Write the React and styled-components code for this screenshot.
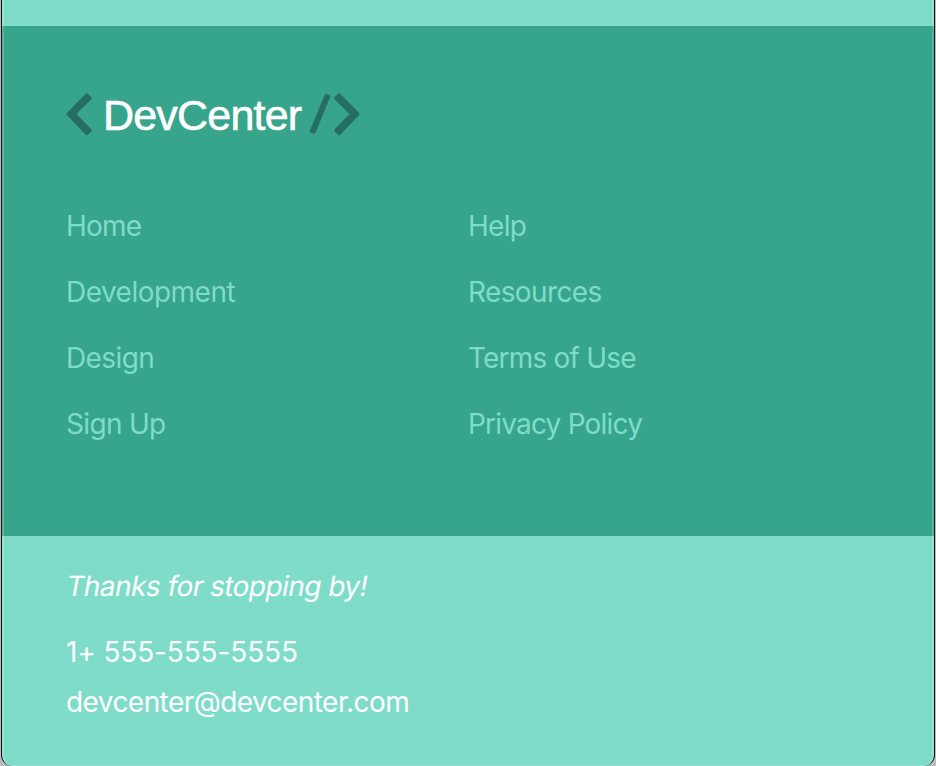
import React from "react";
import styled, { createGlobalStyle } from "styled-components";

const Global = createGlobalStyle`
  * { box-sizing: border-box; }
  body { margin: 0; background: #b9bdbc; font-family: Inter, "Liberation Sans", sans-serif; }
`;
const Window = styled.div`
  width: 936px;
  height: 766px;
  padding: 0 1px;
  overflow: hidden;
`;
const Page = styled.main`
  position: relative;
  display: flex;
  flex-direction: column;
  height: 766px;
  padding-top: 26px;
  background: #7edcc9;
  border: solid #111;
  border-width: 0 1px;
  border-radius: 0 0 11px 11px;
  overflow: hidden;

  &::after {
    content: "";
    position: absolute;
    inset: 0;
    border: solid rgba(255, 255, 255, 0.18);
    border-width: 0 2px 1px;
    border-radius: 0 0 10px 10px;
    pointer-events: none;
  }
`;
const Footer = styled.footer`
  height: 510px;
  padding: 65px 64px 0;
  background: #37a48c;
`;
const Brand = styled.div`
  display: flex;
  align-items: center;
  height: 46px;
  color: #266e60;
`;
const Glyph = styled.svg`
  flex: none;
  fill: currentColor;
  stroke: currentColor;
  stroke-width: 3;
  stroke-linejoin: round;
`;
const BrandName = styled.span`
  width: 214px;
  padding: 2px 0 0 9px;
  color: #fff;
  font-family: "Liberation Sans", Arial, sans-serif;
  font-size: 43px;
  line-height: 46px;
  letter-spacing: -0.8px;
  -webkit-text-stroke: 0.6px #fff;
  white-space: nowrap;
`;
const Links = styled.nav`
  display: grid;
  grid-template-columns: 402px 402px;
  grid-auto-rows: 66px;
  margin-top: 56px;
`;
const Link = styled.a`
  justify-self: start;
  align-self: center;
  color: #7edcc9;
  font-size: 28px;
  white-space: nowrap;
  letter-spacing: ${(p) => p.$track}px;
`;
const Contact = styled.section`
  padding: 25px 64px 0;
`;
const Line = styled.p`
  width: max-content;
  margin: ${(p) => p.$top || 0}px 0 0;
  color: #fff;
  font-size: 28px;
  line-height: 50px;
  letter-spacing: ${(p) => p.$track}px;
`;
const Slanted = styled(Line)`
  margin-left: -1px;
  transform: skewX(-10deg);
  transform-origin: 0 35px;
`;

const links = [
  ["Home", -0.8], ["Help", -0.7],
  ["Development", -0.52], ["Resources", -0.62],
  ["Design", -0.6], ["Terms of Use", -0.8],
  ["Sign Up", -0.68], ["Privacy Policy", -0.8],
];

export default function App() {
  return (
    <Window>
      <Global />
      <Page>
        <Footer>
          <Brand>
            <Glyph width="28" height="46" viewBox="0 0 28 46" aria-hidden="true">
              <path d="M1.9 23 20.8 3.8 24.3 7.2 8.4 23 24.3 39.3 20.8 42.7Z" />
            </Glyph>
            <BrandName>DevCenter</BrandName>
            <Glyph width="54" height="46" viewBox="-4 0 54 46" aria-hidden="true">
              <path d="M-.7 40.3 14 4.5 16.8 5.5 2.1 41.3Z" />
              <path d="M46.1 23 27.2 3.8 23.7 7.2 39.6 23 23.7 39.3 27.2 42.7Z" />
            </Glyph>
          </Brand>
          <Links>
            {links.map(([text, track]) => <Link key={text} $track={track}>{text}</Link>)}
          </Links>
        </Footer>
        <Contact>
          <Slanted $track={-0.54}>Thanks for stopping by!</Slanted>
          <Line $top={16} $track={-0.13}>1+ 555-555-5555</Line>
          <Line $track={-0.56}>devcenter@devcenter.com</Line>
        </Contact>
      </Page>
    </Window>
  );
}
